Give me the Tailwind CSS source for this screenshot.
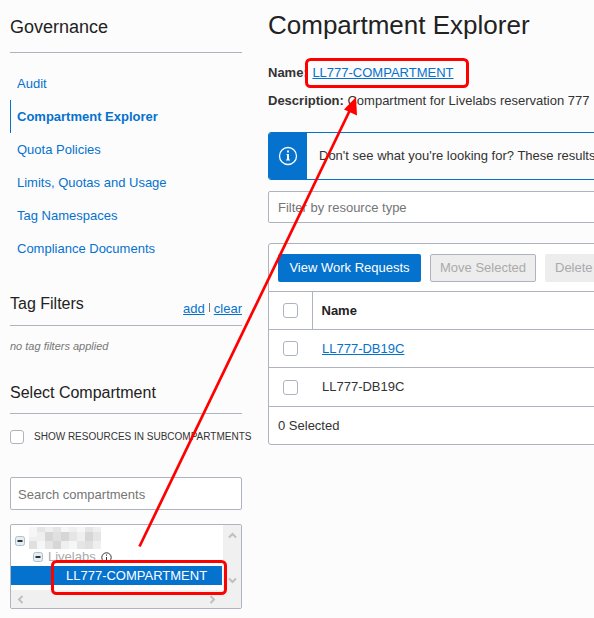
<!DOCTYPE html>
<html lang="en">
<head>
<meta charset="utf-8">
<meta name="viewport" content="width=device-width, initial-scale=1">
<title>Compartment Explorer</title>
<script src="https://cdn.jsdelivr.net/npm/@tailwindcss/browser@4"></script>
</head>
<body class="relative min-h-screen overflow-x-hidden bg-[#fcfcfc] font-['Liberation_Sans',Arial,sans-serif] text-[13px] leading-5 text-[#333]">
<div class="flex">
  <aside class="w-[242px] shrink-0 pl-[10px]">
    <h2 class="border-b border-[#aeb3bf] pt-[15px] pb-[13px] text-[18px] leading-6 text-[#222]">Governance</h2>
    <nav class="mt-[14px] flex flex-col text-[#0572ce]">
      <a href="#" class="border-l border-transparent pl-[6px] leading-[33px]">Audit</a>
      <a href="#" aria-current="page" class="border-l border-[#0572ce] pl-[6px] leading-[33px] font-bold">Compartment Explorer</a>
      <a href="#" class="border-l border-transparent pl-[6px] leading-[33px]">Quota Policies</a>
      <a href="#" class="border-l border-transparent pl-[6px] leading-[33px]">Limits, Quotas and Usage</a>
      <a href="#" class="border-l border-transparent pl-[6px] leading-[33px]">Tag Namespaces</a>
      <a href="#" class="border-l border-transparent pl-[6px] leading-[33px]">Compliance Documents</a>
    </nav>
    <div class="mt-[27px] flex items-end justify-between border-b border-[#aeb3bf] pb-[6px]">
      <h3 class="pb-[3px] text-[16px] leading-6 text-[#222]">Tag Filters</h3>
      <div class="flex gap-1"><a href="#" class="text-[#0572ce] underline decoration-1 underline-offset-1 [text-decoration-skip-ink:none]">add</a><span class="my-1 h-[9px] w-px bg-[#777]"></span><a href="#" class="text-[#0572ce] underline decoration-1 underline-offset-1 [text-decoration-skip-ink:none]">clear</a></div>
    </div>
    <p class="mt-[12px] text-[11px] leading-4 text-[#777] italic">no tag filters applied</p>
    <h3 class="mt-[27px] border-b border-[#aeb3bf] pb-2 text-[16px] leading-6 text-[#222]">Select Compartment</h3>
    <label class="mt-[15px] flex items-center gap-[10px] text-[10px] leading-[15px] whitespace-nowrap"><input type="checkbox" class="size-[14px] shrink-0 appearance-none rounded-[3px] border border-[#aeb3bf] bg-white">SHOW RESOURCES IN SUBCOMPARTMENTS</label>
    <input type="text" aria-label="Search compartments" placeholder="Search compartments" class="mt-[33px] block h-[33px] w-full rounded-[2px] border border-[#aeb3bf] bg-white px-[7px] pt-[2px] placeholder:text-[#757575]">
    <div class="mt-[14px] grid grid-cols-[1fr_19px] grid-rows-[65px_18px] overflow-hidden rounded-[2px] border border-[#aeb3bf] bg-white">
      <ul role="tree" aria-label="Compartments" class="overflow-hidden pt-[1px]">
        <li role="treeitem" aria-expanded="true" class="flex h-[22px] items-center gap-1 pt-[1px] pl-1">
          <svg class="mb-[2px] size-[10px] shrink-0 self-end" viewBox="0 0 10 10"><rect x=".5" y=".5" width="9" height="9" rx="2" fill="#e6eef4" stroke="#a9c2d3"/><path d="M2.5 5h5" stroke="#333" stroke-width="2"/></svg>
          <svg class="h-[22px] w-[72px] shrink-0" viewBox="0 0 72 22" shape-rendering="crispEdges" aria-hidden="true">
            <path fill="#efefef" d="M0 0h72v22H0z"/>
            <path fill="#e5e5e5" d="M8 0h8v5H8zM24 0h8v5h-8zM40 5h8v9h-8zM56 0h8v5h-8zM64 5h8v9h-8zM16 14h8v8h-8zM48 14h8v8h-8z"/>
            <path fill="#f6f6f6" d="M0 0h8v10H0zM32 0h8v5h-8zM48 0h8v5h-8zM8 14h8v8H8zM40 14h8v8h-8z"/>
            <path fill="#d6d6d6" d="M16 5h8v9h-8zM32 5h8v9h-8zM24 14h8v8h-8zM56 5h8v9h-8z"/>
            <path fill="#e0e0e0" d="M0 14h8v8H0zM24 5h8v9h-8zM56 14h8v8h-8z"/>
          </svg>
        </li>
        <li role="treeitem" aria-expanded="true" class="flex h-[18px] items-center gap-[5px] pl-[22px] text-[#aaa]">
          <svg class="size-[10px] shrink-0" viewBox="0 0 10 10"><rect x=".5" y=".5" width="9" height="9" rx="2" fill="#e6eef4" stroke="#a9c2d3"/><path d="M2.5 5h5" stroke="#333" stroke-width="2"/></svg>
          Livelabs
          <svg class="size-[11px] shrink-0" viewBox="0 0 11 11" fill="none" stroke="#333"><circle cx="5.5" cy="5.5" r="4.7"/><path d="M5.5 5v3.5M5.5 2.5v1.2"/></svg>
        </li>
        <li role="treeitem" aria-selected="true" class="h-[19px] bg-[#0572ce] pl-[55px] leading-[19px] text-white">LL777-COMPARTMENT</li>
      </ul>
      <div class="flex flex-col items-center justify-between border-l border-white bg-[#f0f0f0] pt-[7px] pb-[6px]">
        <svg class="h-[7px] w-[9px]" viewBox="0 0 9 7" fill="none" stroke="#bfbfbf" stroke-width="2"><path d="M1 5.5 4.5 2 8 5.5"/></svg>
        <svg class="h-[7px] w-[9px]" viewBox="0 0 9 7" fill="none" stroke="#bfbfbf" stroke-width="2"><path d="M1 1.5 4.5 5 8 1.5"/></svg>
      </div>
      <div class="flex items-center justify-between bg-[#f0f0f0] px-[6px]">
        <svg class="h-[9px] w-[7px]" viewBox="0 0 7 9" fill="none" stroke="#bfbfbf" stroke-width="2"><path d="M5.5 1 2 4.5 5.5 8"/></svg>
        <svg class="h-[9px] w-[7px]" viewBox="0 0 7 9" fill="none" stroke="#bfbfbf" stroke-width="2"><path d="M1.5 1 5 4.5 1.5 8"/></svg>
      </div>
      <div class="bg-[#f0f0f0]"></div>
    </div>
  </aside>

  <main class="-mr-2 ml-[26px] min-w-0 flex-1 whitespace-nowrap">
    <h1 class="pt-[9px] text-[26px] leading-8 text-[#222]">Compartment Explorer</h1>
    <p class="mt-[22px]"><b>Name:</b> <a href="#" class="ml-px text-[#0572ce] underline decoration-1 underline-offset-1 [text-decoration-skip-ink:none]">LL777-COMPARTMENT</a></p>
    <p class="mt-2"><b>Description:</b> Compartment for Livelabs reservation 777</p>
    <div role="status" class="mt-[21px] flex h-[48px] items-center overflow-hidden rounded-[3px] border border-[#0572ce]">
      <div class="flex w-[38px] shrink-0 items-center justify-center self-stretch bg-[#0572ce]">
        <svg class="size-[20px]" viewBox="0 0 20 20" fill="none" stroke="#fff"><circle cx="10" cy="10" r="8.5" stroke-width="1.3"/><path d="M10 8v6" stroke-width="2"/><path d="M8.5 8.5H10M8 14h4" stroke-width="1"/><path d="M10 4.5v2" stroke-width="2"/></svg>
      </div>
      <p class="pl-3">Don't see what you're looking for? These results</p>
    </div>
    <input type="text" aria-label="Filter by resource type" placeholder="Filter by resource type" class="mt-[11px] block h-[32px] w-full rounded-[2px] border border-[#aeb3bf] bg-white px-[9px] placeholder:text-[#757575]">
    <section class="mt-[20px] overflow-hidden rounded-[3px] border border-[#aeb3bf] bg-white">
      <div class="flex gap-[9px] px-[9px] pt-[10px] pb-[9px]">
        <button class="h-[28px] w-[143px] shrink-0 rounded-[2px] bg-[#0572ce] text-white">View Work Requests</button>
        <button disabled class="h-[28px] w-[106px] shrink-0 rounded-[2px] border border-[#aeb3bf] bg-[#ededed] text-[#aaa]">Move Selected</button>
        <button disabled class="h-[28px] shrink-0 rounded-[2px] bg-[#ededed] px-[10px] text-[#aaa]">Delete</button>
      </div>
      <table class="w-full border-collapse border-y border-[#aeb3bf]">
        <thead>
          <tr class="h-[38px]">
            <th class="w-[43px] border-r border-[#aeb3bf] p-0"><input type="checkbox" aria-label="Select all" class="mx-auto block size-[15px] appearance-none rounded-[3px] border border-[#aeb3bf] bg-white"></th>
            <th class="p-0 pl-[9px] text-left text-[#222]">Name</th>
          </tr>
        </thead>
        <tbody>
          <tr class="h-[38px] border-t border-[#aeb3bf]">
            <td class="p-0"><input type="checkbox" aria-label="Select row 1" class="mx-auto block size-[15px] appearance-none rounded-[3px] border border-[#aeb3bf] bg-white"></td>
            <td class="p-0 pl-[10px]"><a href="#" class="text-[#0572ce] underline decoration-1 underline-offset-1 [text-decoration-skip-ink:none]">LL777-DB19C</a></td>
          </tr>
          <tr class="h-[39px] border-t border-[#aeb3bf]">
            <td class="p-0"><input type="checkbox" aria-label="Select row 2" class="mx-auto block size-[15px] appearance-none rounded-[3px] border border-[#aeb3bf] bg-white"></td>
            <td class="p-0 pl-[10px]">LL777-DB19C</td>
          </tr>
        </tbody>
      </table>
      <p class="px-[9px] leading-[37px]">0 Selected</p>
    </section>
  </main>
</div>

<!-- Callout linking the selected compartment to its name -->
<svg class="pointer-events-none absolute top-0 left-0 h-[618px] w-[594px]" viewBox="0 0 594 618" fill="none" stroke="#f00" stroke-width="3" aria-hidden="true">
  <rect x="306.500" y="59.500" width="161" height="27" rx="4"/>
  <rect x="52.500" y="561.500" width="173" height="32" rx="4"/>
  <path d="M139.500 546.500 350 110" stroke-width="2.700"/>
  <path d="M356 97 344 109.500 357 115.500z" fill="#f00" stroke="none"/>
</svg>
</body>
</html>
